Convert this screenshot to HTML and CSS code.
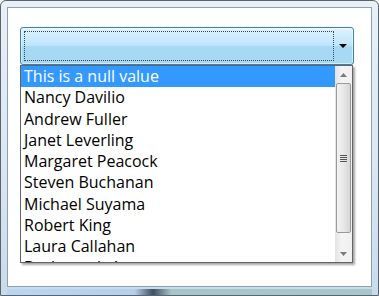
FILE: index.html
```html
<!DOCTYPE html>
<html>
<head>
<meta charset="utf-8">
<link rel="stylesheet" href="styles.css">
</head>
<body>
<div class="window">
  <div class="client">
    <div class="combo">
      <div class="combo-face">
        <div class="focus"></div>
        <div class="arrow"></div>
      </div>
      <div class="popup">
        <ul class="list">
          <li class="sel">This is a null value</li>
          <li>Nancy Davilio</li>
          <li>Andrew Fuller</li>
          <li>Janet Leverling</li>
          <li>Margaret Peacock</li>
          <li>Steven Buchanan</li>
          <li>Michael Suyama</li>
          <li>Robert King</li>
          <li>Laura Callahan</li>
          <li>Dodsworth Anne</li>
        </ul>
        <div class="scrollbar">
          <div class="sb-btn"><svg width="7" height="4" viewBox="0 0 7 4"><path d="M0 4 L3.5 0 L7 4 Z" fill="#7a7a7a"/></svg></div>
          <div class="thumb"><div class="grip"><i></i><i></i><i></i><i></i></div></div>
          <div class="sb-track"></div>
          <div class="sb-btn"><svg width="7" height="4" viewBox="0 0 7 4"><path d="M0 0 L3.5 4 L7 0 Z" fill="#7a7a7a"/></svg></div>
        </div>
      </div>
    </div>
  </div>
</div>
</body>
</html>
```
FILE: styles.css
```css
html, body { margin: 0; padding: 0; }
body { width: 379px; height: 296px; overflow: hidden; background: #fff; }
.window {
  box-sizing: border-box;
  width: 379px; height: 296px;
  border: 1px solid #5a6470;
  border-radius: 6px 6px 0 0;
  background: linear-gradient(to bottom, #e9f0f7 0%, #d9e6f1 60%, #c9dae9 100%);
  padding: 6px 6px 0 6px;
  display: flex;
  flex-direction: column;
}
.client {
  flex: 1;
  border: 1px solid #8ba0b4;
  background: #fff;
  padding: 19px 17px 0 12px;
  position: relative;
}
.window::after {
  content: "";
  display: block;
  height: 6px;
  margin-top: 1px;
  background: linear-gradient(to right, #bcd5f0 0%, #b6cfea 35%, #3f4e63 40%, #a8c4c8 45%, #a9c7cb 100%);
  border-top: 1px solid #c8dbe9;
}
.combo { position: relative; }
.combo-face {
  box-sizing: border-box;
  height: 38px;
  border: 1px solid #3c7fb1;
  border-radius: 3px;
  background: linear-gradient(to bottom, #eaf6fd 0%, #d9f0fc 8%, #bee6fd 48%, #a7d9f5 52%, #a7d9f5 100%);
  box-shadow: inset 0 0 0 1px rgba(255,255,255,0.5);
  position: relative;
}
.focus {
  position: absolute;
  left: 3px; top: 3px; right: 19px; bottom: 3px;
  border: 1px dotted #2b4a63;
}
.arrow {
  position: absolute;
  right: 6px; top: 16px;
  width: 0; height: 0;
  border-left: 4px solid transparent;
  border-right: 4px solid transparent;
  border-top: 4px solid #000;
}
.popup {
  position: absolute;
  left: 0; top: 38px;
  width: 333px; height: 198px;
  box-sizing: border-box;
  border: 1px solid #646464;
  background: #fff;
  display: flex;
  box-shadow: 2px 2px 2px rgba(0,0,0,0.35);
  overflow: hidden;
}
.list {
  list-style: none;
  margin: 0; padding: 0;
  flex: 1;
  font-family: "Open Sans", sans-serif;
  font-size: 16px;
  color: #000;
  overflow: hidden;
}
.list li {
  height: 21.25px;
  line-height: 21px;
  padding-left: 3px;
  white-space: nowrap;
}
.list li.sel { background: #3399ff; color: #fff; }
.scrollbar {
  width: 17px;
  background: linear-gradient(to right, #e3e3e3, #f4f4f4 40%, #f0f0f0);
  display: flex;
  flex-direction: column;
}
.sb-btn {
  height: 17px;
  display: flex; align-items: center; justify-content: center;
}
.thumb {
  box-sizing: border-box;
  height: 150px;
  margin: 0 1px;
  border: 1px solid #9a9a9a;
  border-radius: 2px;
  background: linear-gradient(to right, #f3f3f3, #e8e8e8 50%, #d6d6d6);
  display: flex; align-items: center; justify-content: center;
}
.grip { display: flex; flex-direction: column; gap: 1px; }
.grip i { display: block; width: 7px; height: 1px; background: #555; }
.sb-track { flex: 1; }
```
